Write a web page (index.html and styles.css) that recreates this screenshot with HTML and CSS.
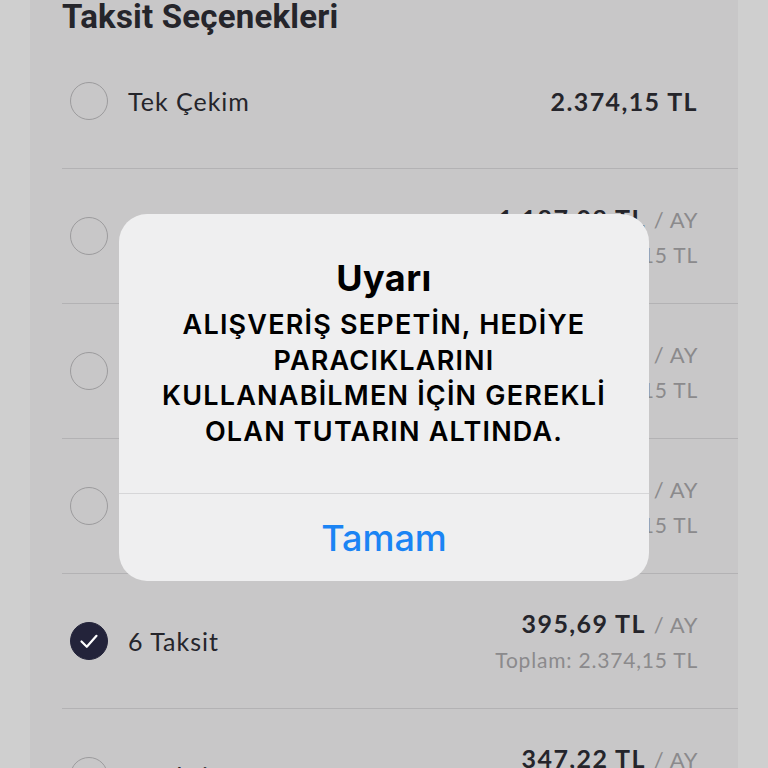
FILE: index.html
```html
<!DOCTYPE html>
<html lang="tr">
<head>
    <meta charset="UTF-8">
    <meta name="viewport" content="width=device-width, initial-scale=1.0">
    <title>Taksit Seçenekleri</title>
    <link rel="stylesheet" href="styles.css">
</head>
<body>
    <div class="card">
        <h2 class="card-title">Taksit Seçenekleri</h2>

        <ul class="options">
            <li class="option">
                <span class="radio"></span>
                <span class="option-label">Tek Çekim</span>
                <div class="option-price">
                    <div class="price-main"><strong>2.374,15 TL</strong></div>
                </div>
            </li>
            <li class="option">
                <span class="radio"></span>
                <span class="option-label">2 Taksit</span>
                <div class="option-price">
                    <div class="price-main"><strong>1.187,08 TL</strong> <span class="per">/ AY</span></div>
                    <div class="price-total">Toplam: 2.374,15 TL</div>
                </div>
            </li>
            <li class="option">
                <span class="radio"></span>
                <span class="option-label">3 Taksit</span>
                <div class="option-price">
                    <div class="price-main"><strong>791,38 TL</strong> <span class="per">/ AY</span></div>
                    <div class="price-total">Toplam: 2.374,15 TL</div>
                </div>
            </li>
            <li class="option">
                <span class="radio"></span>
                <span class="option-label">4 Taksit</span>
                <div class="option-price">
                    <div class="price-main"><strong>593,54 TL</strong> <span class="per">/ AY</span></div>
                    <div class="price-total">Toplam: 2.374,15 TL</div>
                </div>
            </li>
            <li class="option">
                <span class="radio checked">
                    <svg viewBox="0 0 38 38" width="38" height="38">
                        <path d="M11.5 19.5 L16.8 24.8 L26.5 13.8" fill="none" stroke="#fff" stroke-width="2.2" stroke-linecap="round" stroke-linejoin="round"/>
                    </svg>
                </span>
                <span class="option-label">6 Taksit</span>
                <div class="option-price">
                    <div class="price-main"><strong>395,69 TL</strong> <span class="per">/ AY</span></div>
                    <div class="price-total">Toplam: 2.374,15 TL</div>
                </div>
            </li>
            <li class="option">
                <span class="radio"></span>
                <span class="option-label">9 Taksit</span>
                <div class="option-price">
                    <div class="price-main"><strong>347,22 TL</strong> <span class="per">/ AY</span></div>
                    <div class="price-total">Toplam: 3.124,98 TL</div>
                </div>
            </li>
        </ul>
    </div>

    <div class="alert">
        <div class="alert-body">
            <div class="alert-title">Uyarı</div>
            <p class="alert-message">ALIŞVERİŞ SEPETİN, HEDİYE<br>PARACIKLARINI<br>KULLANABİLMEN İÇİN GEREKLİ<br>OLAN TUTARIN ALTINDA.</p>
        </div>
        <button class="alert-button">Tamam</button>
    </div>
</body>
</html>
```

FILE: styles.css
```css
:root {
    --page-bg: #cfcfcf;
    --card-bg: #c8c7c8;
    --text-dark: #25252b;
    --text-muted: #8b8a8c;
    --line: #b3b2b4;
    --alert-bg: #efeff0;
    --alert-blue: #1b84f4;
}

* {
    margin: 0;
    padding: 0;
    box-sizing: border-box;
}

body {
    background-color: var(--page-bg);
    height: 768px;
    overflow: hidden;
    position: relative;
    font-family: Lato, 'Noto Sans', sans-serif;
}

.card {
    margin: 0 30px;
    height: 768px;
    background-color: var(--card-bg);
    overflow: hidden;
}

.card-title {
    height: 35px;
    padding-left: 32px;
    font-family: Roboto, sans-serif;
    font-size: 33px;
    font-weight: 700;
    line-height: 35px;
    letter-spacing: 0.2px;
    color: var(--text-dark);
    margin-top: -1px;
}

.options {
    list-style: none;
    margin-left: 32px;
}

.option {
    height: 135px;
    border-bottom: 1px solid var(--line);
    display: flex;
    align-items: center;
    padding: 0 40px 0 8px;
}

.radio {
    width: 38px;
    height: 38px;
    border-radius: 50%;
    border: 1.5px solid #9c9b9d;
    flex-shrink: 0;
}

.radio.checked {
    background-color: #23233a;
    border-color: #23233a;
}

.radio.checked svg {
    display: block;
    margin: -1.5px;
}

.option-label {
    margin-left: 20px;
    font-size: 25px;
    color: var(--text-dark);
    letter-spacing: 1px;
}

.option-price {
    margin-left: auto;
    text-align: right;
}

.price-main {
    font-size: 25px;
    line-height: 35px;
    color: var(--text-dark);
    letter-spacing: 1.4px;
}

.price-main strong {
    font-weight: 700;
}

.per {
    color: var(--text-muted);
    font-size: 22px;
    letter-spacing: 0.6px;
}

.price-total {
    font-size: 21px;
    line-height: 35px;
    color: var(--text-muted);
    letter-spacing: 0.8px;
}

.alert {
    position: absolute;
    left: 119px;
    top: 214px;
    width: 530px;
    height: 367px;
    background-color: var(--alert-bg);
    border-radius: 28px;
    display: flex;
    flex-direction: column;
    font-family: Inter, Roboto, sans-serif;
    text-align: center;
}

.alert-body {
    flex: 1;
    padding: 42px 10px 0;
    border-bottom: 1px solid #d6d6d8;
}

.alert-title {
    font-size: 36px;
    font-weight: 700;
    line-height: 44px;
    letter-spacing: 0.4px;
    color: #000;
    margin-bottom: 7px;
}

.alert-message {
    font-size: 27px;
    font-weight: 600;
    line-height: 35.5px;
    letter-spacing: 1.2px;
    color: #000;
}

.alert-button {
    height: 87px;
    border: none;
    background: none;
    font-family: Inter, Roboto, sans-serif;
    font-size: 36px;
    font-weight: 500;
    color: var(--alert-blue);
}
```
